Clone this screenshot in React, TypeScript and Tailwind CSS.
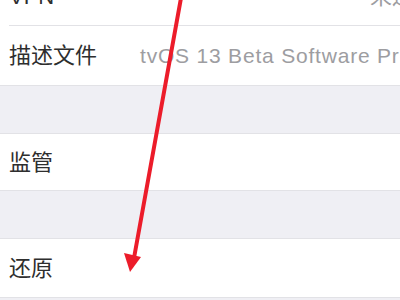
const font = { fontFamily: '"Liberation Sans", "Noto Sans CJK SC", sans-serif' };

function Row({ label, value, h }: { label: string; value?: string; h: string }) {
  return (
    <div className={`flex ${h} items-center pl-[9px]`}>
      <span className="shrink-0 text-[22px] text-[#2e2e2e]">{label}</span>
      {value && (
        <span className="ml-[43px] whitespace-nowrap text-[21px] tracking-[0.8px] text-[#9d9da1]">
          {value}
        </span>
      )}
    </div>
  );
}

export default function App() {
  return (
    <div className="relative h-[300px] w-[400px] overflow-hidden bg-[#efeff4]" style={font}>
      <div className="-mt-[32px] border-b border-[#e2e2e6] bg-white">
        <div className="flex h-[58px] items-center pl-[9px]">
          <div className="flex h-full flex-1 items-center justify-between border-b border-[#e2e2e6]">
            <span className="text-[22px] text-[#2e2e2e]">VPN</span>
            <span className="-mr-[36px] whitespace-nowrap text-[22px] text-[#9d9da1]">未连接</span>
          </div>
        </div>
        <Row label="描述文件" value="tvOS 13 Beta Software Profile" h="h-[59px]" />
      </div>

      <div className="h-[47px]" />

      <div className="border-y border-[#e2e2e6] bg-white">
        <Row label="监管" h="h-[56px]" />
      </div>

      <div className="h-[47px]" />

      <div className="border-y border-[#e2e2e6] bg-white">
        <Row label="还原" h="h-[58px]" />
      </div>

      <svg className="absolute left-0 top-0" width="400" height="300" viewBox="0 0 400 300">
        <line x1="181" y1="-2" x2="134" y2="258" stroke="#ec1c2a" strokeWidth="4" strokeLinecap="round" />
        <polygon points="124,253 141,257 130,272" fill="#ec1c2a" />
      </svg>
    </div>
  );
}
